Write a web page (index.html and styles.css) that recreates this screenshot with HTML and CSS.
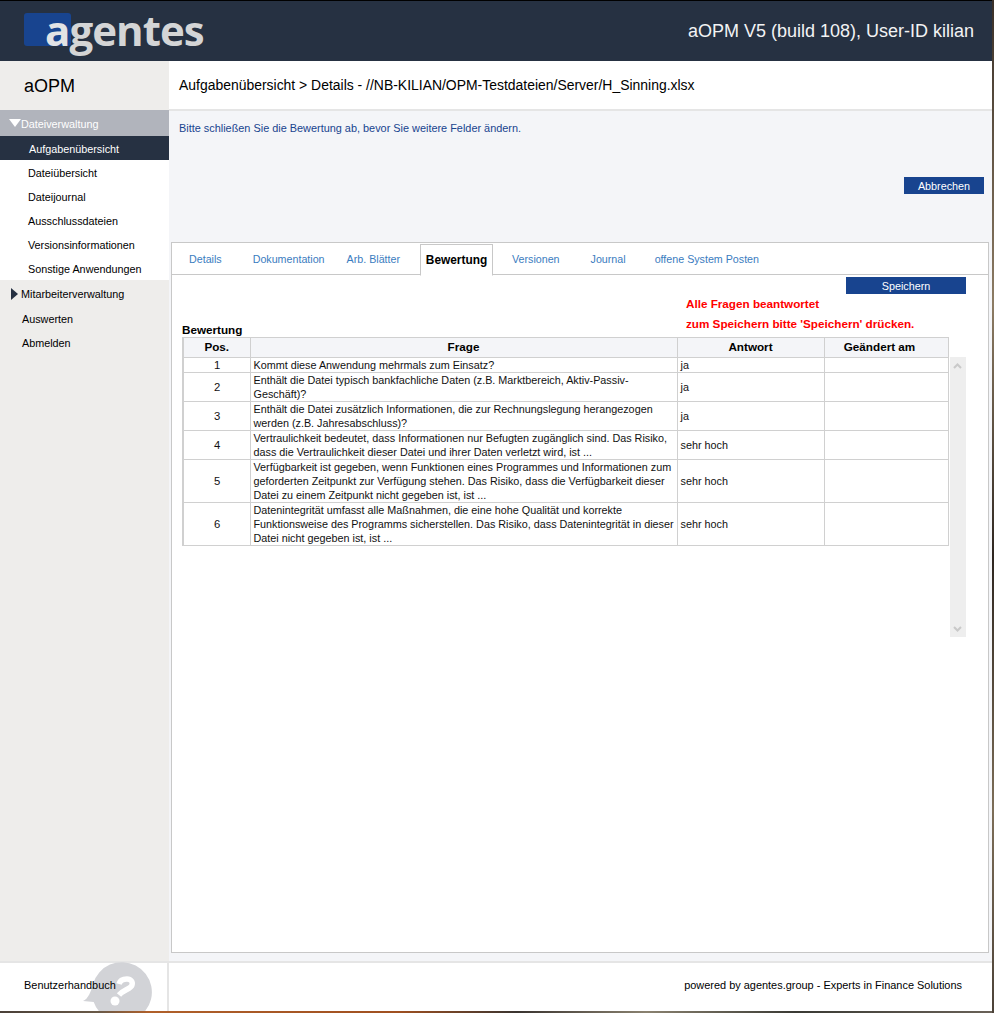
FILE: index.html
```html
<!DOCTYPE html>
<html lang="de">
<head>
<meta charset="utf-8">
<title>aOPM</title>
<link rel="stylesheet" href="styles.css">
</head>
<body>
<div class="app">
  <header class="topbar">
    <div class="logo"><span class="logo-mark"></span><span class="logo-text"><span class="logo-a">a</span>gentes</span></div>
    <div class="build">aOPM V5 (build 108), User-ID kilian</div>
  </header>
  <div class="middle">
    <nav class="sidebar">
      <div class="brand">aOPM</div>
      <div class="group-open"><span class="tri-down"></span>Dateiverwaltung</div>
      <ul class="subnav">
        <li class="active">Aufgabenübersicht</li>
        <li>Dateiübersicht</li>
        <li>Dateijournal</li>
        <li>Ausschlussdateien</li>
        <li>Versionsinformationen</li>
        <li>Sonstige Anwendungen</li>
      </ul>
      <div class="group-closed"><span class="tri-right"></span>Mitarbeiterverwaltung</div>
      <div class="navlink">Auswerten</div>
      <div class="navlink">Abmelden</div>
    </nav>
    <main class="main">
      <div class="crumb">Aufgabenübersicht &gt; Details - //NB-KILIAN/OPM-Testdateien/Server/H_Sinning.xlsx</div>
      <section class="info">
        <p class="hint">Bitte schließen Sie die Bewertung ab, bevor Sie weitere Felder ändern.</p>
        <div class="info-actions"><button class="btn btn-cancel">Abbrechen</button></div>
      </section>
      <section class="panel">
        <div class="tabs">
          <span class="tab t1">Details</span>
          <span class="tab t2">Dokumentation</span>
          <span class="tab t3">Arb. Blätter</span>
          <span class="tab tab-active">Bewertung</span>
          <span class="tab t5">Versionen</span>
          <span class="tab t6">Journal</span>
          <span class="tab t7">offene System Posten</span>
        </div>
        <div class="panel-body">
          <div class="save-row"><button class="btn btn-save">Speichern</button></div>
          <div class="notice">
            <div>Alle Fragen beantwortet</div>
            <div>zum Speichern bitte 'Speichern' drücken.</div>
          </div>
          <div class="table-title">Bewertung</div>
          <div class="table-wrap">
            <table class="grid">
              <colgroup><col class="c-pos"><col class="c-q"><col class="c-a"><col class="c-d"></colgroup>
              <thead><tr><th>Pos.</th><th>Frage</th><th>Antwort</th><th class="th-date">Geändert am</th></tr></thead>
              <tbody>
                <tr><td class="pos">1</td><td>Kommt diese Anwendung mehrmals zum Einsatz?</td><td>ja</td><td></td></tr>
                <tr><td class="pos">2</td><td>Enthält die Datei typisch bankfachliche Daten (z.B. Marktbereich, Aktiv-Passiv-Geschäft)?</td><td>ja</td><td></td></tr>
                <tr><td class="pos">3</td><td>Enthält die Datei zusätzlich Informationen, die zur Rechnungslegung herangezogen werden (z.B. Jahresabschluss)?</td><td>ja</td><td></td></tr>
                <tr><td class="pos">4</td><td>Vertraulichkeit bedeutet, dass Informationen nur Befugten zugänglich sind. Das Risiko, dass die Vertraulichkeit dieser Datei und ihrer Daten verletzt wird, ist ...</td><td>sehr hoch</td><td></td></tr>
                <tr><td class="pos">5</td><td>Verfügbarkeit ist gegeben, wenn Funktionen eines Programmes und Informationen zum geforderten Zeitpunkt zur Verfügung stehen. Das Risiko, dass die Verfügbarkeit dieser Datei zu einem Zeitpunkt nicht gegeben ist, ist ...</td><td>sehr hoch</td><td></td></tr>
                <tr><td class="pos">6</td><td>Datenintegrität umfasst alle Maßnahmen, die eine hohe Qualität und korrekte Funktionsweise des Programms sicherstellen. Das Risiko, dass Datenintegrität in dieser Datei nicht gegeben ist, ist ...</td><td>sehr hoch</td><td></td></tr>
              </tbody>
            </table>
            <div class="scroll">
              <svg width="9" height="6" viewBox="0 0 9 6"><path d="M1 5 4.500 1.500 8 5" fill="none" stroke="#c9c9c9" stroke-width="2"/></svg>
              <svg width="9" height="6" viewBox="0 0 9 6"><path d="M1 1 4.500 4.500 8 1" fill="none" stroke="#c9c9c9" stroke-width="2"/></svg>
            </div>
          </div>
        </div>
      </section>
    </main>
  </div>
  <footer class="footer">
    <div class="foot-left">
      <svg class="help" width="72" height="49" viewBox="0 0 72 49">
        <path d="M2 39C7 37 10 30 12 22A30 30 0 1 1 64.200 49H17.800A30 30 0 0 1 12.700 40Z" fill="#d2d3d7"/>
        <path d="M38 22C39 18 43 17 46 17C50 17 52 20 51 23C50 27 42 28 38 33" fill="none" stroke="#fff" stroke-width="5.500"/>
        <circle cx="34" cy="39" r="4.500" fill="#fff"/>
      </svg>
      <span class="manual">Benutzerhandbuch</span>
    </div>
    <div class="foot-right">powered by agentes.group - Experts in Finance Solutions</div>
  </footer>
</div>
</body>
</html>
```
FILE: styles.css
```css
* { box-sizing: border-box; }
html, body { margin: 0; height: 100%; }
body {
  background:
    linear-gradient(180deg, #3a3028, #8d7c64 30%, #2e2620 55%, #7d6e58 80%, #4c4238) right top / 2px 100% no-repeat,
    linear-gradient(90deg, #4a4038 0, #6a5a48 10%, #b0602a 15%, #a05020 40%, #3a3430 52%, #8a8270 65%, #3a3a34 80%, #6a6258 100%);
  font-family: "Liberation Sans", Arial, sans-serif;
  color: #000;
  overflow: hidden;
}
.app {
  width: 992px;
  height: 1011px;
  display: flex;
  flex-direction: column;
  background: #fff;
}
.topbar {
  height: 61px;
  flex: none;
  background: #263142;
  border-top: 1px solid #000;
  display: flex;
  align-items: center;
  justify-content: space-between;
  padding: 0 18px 0 24px;
}
.logo { position: relative; width: 190px; height: 33px; margin-top: -3px; }
.logo-mark {
  position: absolute;
  left: 0; top: 0;
  width: 47px; height: 33px;
  background: #18448f;
  border-radius: 3px;
}
.logo-text {
  position: relative;
  display: block;
  padding-left: 21px;
  font: 700 42px/33px "Open Sans", sans-serif;
  color: #d4d5d6;
  letter-spacing: -0.950px;
}
.logo-a { color: #e2e3e5; }
.build { color: #f2f3f4; font-size: 18px; margin-top: 1px; }

.middle { flex: 1; display: flex; min-height: 0; }
.sidebar {
  width: 169px;
  flex: none;
  background: #eeedeb;
  font-size: 10.800px;
}
.brand {
  height: 49px;
  padding: 15px 0 0 24px;
  font-size: 18px;
  line-height: 20px;
}
.group-open {
  height: 26px;
  background: #b1b4bc;
  color: #fff;
  display: flex;
  align-items: center;
  padding: 2px 0 0 9px;
}
.tri-down {
  width: 0; height: 0;
  margin-bottom: 2px;
  border-left: 6px solid transparent;
  border-right: 6px solid transparent;
  border-top: 8px solid #fff;
}
.subnav { list-style: none; margin: 0; padding: 0; background: #fff; }
.subnav li { height: 24px; line-height: 26px; padding-left: 28px; }
.subnav .active { background: #263142; color: #fff; padding-left: 29px; }
.group-closed {
  height: 28px;
  display: flex;
  align-items: center;
  padding-left: 11px;
}
.tri-right {
  width: 0; height: 0;
  margin-right: 3px;
  border-top: 6px solid transparent;
  border-bottom: 6px solid transparent;
  border-left: 7px solid #263142;
}
.navlink { height: 24px; line-height: 22px; padding-left: 22px; }

.main {
  flex: 1;
  min-width: 0;
  background: #f4f5f8;
  display: flex;
  flex-direction: column;
}
.crumb {
  height: 50px;
  flex: none;
  background: #fff;
  border-bottom: 2px solid #e5e5e5;
  padding: 15px 0 0 10px;
  font-size: 13.950px;
  line-height: 18px;
}
.info { height: 131px; flex: none; padding: 11px 8px 0 10px; }
.hint { margin: 0; font-size: 10.900px; line-height: 13px; color: #18448f; }
.info-actions { display: flex; justify-content: flex-end; margin-top: 42px; }
.btn {
  display: block;
  border: 0;
  padding: 1px 0 0;
  background: #18448f;
  color: #fff;
  font: 10.800px/16px "Liberation Sans", Arial, sans-serif;
  height: 17px;
}
.btn-cancel { width: 80px; }
.btn-save { width: 120px; }
.panel {
  flex: 1;
  margin: 0 3px 8px 2px;
  background: #fff;
  border: 1px solid #c8c8c8;
  min-height: 0;
}
.tabs {
  height: 32px;
  border-bottom: 1px solid #c8c8c8;
  display: flex;
  align-items: flex-start;
  font-size: 10.700px;
  color: #3a7cc0;
}
.tab { line-height: 30px; padding-top: 1px; }
.t1 { margin-left: 17px; }
.t2 { margin-left: 31px; }
.t3 { margin-left: 22px; }
.t5 { margin-left: 19px; }
.t6 { margin-left: 31px; }
.t7 { margin-left: 29px; }
.tab-active {
  margin: 1px 0 -1px 20px;
  width: 73px;
  height: 32px;
  padding-top: 0;
  text-align: center;
  background: #fff;
  border: 1px solid #c8c8c8;
  border-bottom-color: #fff;
  color: #000;
  font-weight: 700;
  font-size: 11.900px;
  line-height: 30px;
}
.panel-body { padding: 2px 22px 0 10px; }
.save-row { display: flex; justify-content: flex-end; }
.notice {
  margin: 0 0 0 504px;
  color: #f00;
  font-weight: 700;
  font-size: 11.700px;
  line-height: 20px;
}
.table-title {
  font-weight: 700;
  font-size: 11.700px;
  line-height: 13px;
  margin: -11px 0 1px;
}
.table-wrap { display: flex; align-items: flex-start; }
.grid {
  border-collapse: collapse;
  table-layout: fixed;
  width: 765px;
  flex: none;
  font-size: 10.800px;
  line-height: 14px;
  border: 1px solid #d0d0d0;
  border-left-width: 2px;
}
.c-pos { width: 67px; }
.c-q { width: 427px; }
.c-a { width: 147px; }
.c-d { width: 124px; }
.grid th {
  height: 20px;
  padding: 0 0 2px;
  background: #f4f5f8;
  border: 1px solid #d0d0d0;
  font-size: 11.700px;
  font-weight: 700;
  text-align: center;
}
.grid .th-date { padding-right: 13px; }
.grid td {
  padding: 0 2px 0 3px;
  border: 1px solid #d0d0d0;
  vertical-align: middle;
  background: #fff;
  color: #111;
}
.grid .pos { text-align: center; font-size: 11.300px; }
.scroll {
  flex: none;
  width: 16px;
  height: 280px;
  margin: 20px 0 0 1px;
  background: #eeeeee;
  display: flex;
  flex-direction: column;
  justify-content: space-between;
  align-items: center;
  padding: 6px 0 5px;
}
.scroll svg { display: block; }

.footer {
  height: 50px;
  flex: none;
  display: flex;
  background: #fff;
  border-top: 2px solid #e5e5e5;
  font-size: 10.950px;
}
.foot-left {
  position: relative;
  width: 169px;
  flex: none;
  border-right: 2px solid #e5e5e5;
  padding: 16px 0 0 24px;
}
.help { position: absolute; left: 81px; top: -1px; }
.manual { position: relative; }
.foot-right { flex: 1; text-align: right; padding: 16px 30px 0 0; }
```
